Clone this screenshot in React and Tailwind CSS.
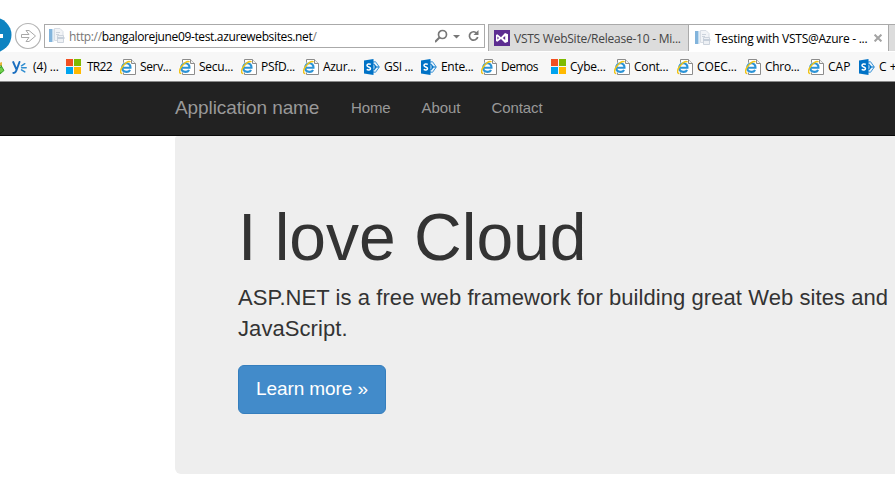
const UI = "font-['Open_Sans','Noto_Sans',sans-serif]";

function IeIcon() {
  return (
    <svg width="16" height="16" viewBox="0 0 16 16" className="block shrink-0">
      <path d="M3.500 .5h8l4 4v11h-12z" fill="#fff" stroke="#8c8c8c" />
      <path d="M11.500 .5v4h4" fill="#f2f2f2" stroke="#8c8c8c" />
      <circle cx="6" cy="8.500" r="5.500" fill="#fff" />
      <path d="M2.500 8.800h8c.2-2.900-1.700-4.600-4-4.600-2.500 0-4.300 1.900-4.300 4.400 0 2.600 1.800 4.300 4.300 4.300 1.700 0 2.900-.7 3.600-2" fill="none" stroke="#2b93d6" strokeWidth="2.100" />
      <path d="M2.300 14.600C-.6 14.400.3 10 3.400 6.400 5.800 3.600 9 1.700 10.500 2.900" fill="none" stroke="#f0c419" strokeWidth="1.500" />
    </svg>
  );
}

function MsIcon() {
  return (
    <svg width="15" height="15" viewBox="0 0 15 15" className="block shrink-0">
      <path fill="#f25022" d="M0 0h7v7H0z" />
      <path fill="#7fba00" d="M8 0h7v7H8z" />
      <path fill="#00a4ef" d="M0 8h7v7H0z" />
      <path fill="#ffb900" d="M8 8h7v7H8z" />
    </svg>
  );
}

function SharePointIcon() {
  return (
    <svg width="16" height="16" viewBox="0 0 16 16" className="block shrink-0">
      <path d="M9 3l2.500-.3L15.400 8l-3.900 5.300L9 13" fill="#e4f1fb" stroke="#3b93d6" strokeWidth="1" />
      <path d="M9.500 4.800L12.300 8l-2.800 3.200M10 8h5" fill="none" stroke="#0072c6" strokeWidth="1.100" />
      <path d="M0 1.500L9.500 0v16L0 14.500z" fill="#0072c6" />
      <path d="M6.800 5.400C5.400 4.500 3 4.800 3 6.400c0 1.900 3.500 1.400 3.500 3.200 0 1.600-2.400 1.700-3.800.8" fill="none" stroke="#fff" strokeWidth="1.500" />
    </svg>
  );
}

function YammerIcon() {
  return (
    <svg width="16" height="16" viewBox="0 0 16 16" className="block shrink-0">
      <path d="M1.200 3l3.300 7.600M7.500 3L4.300 11.600c-.7 2-1.300 2.600-3 2.300" fill="none" stroke="#1b6fc0" strokeWidth="1.900" strokeLinecap="round" />
      <path d="M9.500 6.800l3.300-2.100M9.600 8.800h4.600M9.500 10.800l3.300 2.100" fill="none" stroke="#2f8dd0" strokeWidth="1.500" strokeLinecap="round" />
    </svg>
  );
}

function PageIcon() {
  return (
    <svg width="16" height="16" viewBox="0 0 16 16" className="block shrink-0">
      <path d="M0 1h3.500v13H0z" fill="#82b4dc" />
      <path d="M3.500 1h1v13h-1z" fill="#c6dcee" />
      <path d="M5.500 .5h5.500l3 3v9h-8.500z" fill="#f2f4f7" stroke="#d8dde4" />
      <path d="M7 4.500h4M7 6.500h3" stroke="#ccd3dc" />
      <path d="M8.500 7.500h6v7h-6z" fill="#eef1f5" stroke="#cdd4dd" />
      <path d="M8 9h7.500v2H8z" fill="#c6cfda" />
    </svg>
  );
}

const icons = { ie: IeIcon, ms: MsIcon, sp: SharePointIcon, ya: YammerIcon };

const bookmarks = [
  ["ya", "(4) ...", "w-[54px]", "gap-[5px] tracking-[-0.1px]"],
  ["ms", "TR22", "w-[54px]", "gap-[6px] tracking-[-0.75px]"],
  ["ie", "Serv...", "w-[59px]", "gap-1 tracking-[-0.35px]"],
  ["ie", "Secu...", "w-[62px]", "gap-1 tracking-[-0.25px]"],
  ["ie", "PSfD...", "w-[62px]", "gap-1 tracking-[-0.3px]"],
  ["ie", "Azur...", "w-[61px]", "gap-1 tracking-[-0.3px]"],
  ["sp", "GSI ...", "w-[57px]", "gap-1 tracking-[-0.3px]"],
  ["sp", "Ente...", "w-[60px]", "gap-1 tracking-[-0.3px]"],
  ["ie", "Demos", "w-[70px]", "gap-1 tracking-[-0.5px]"],
  ["ms", "Cybe...", "w-[63px]", "gap-1 tracking-[-0.2px]"],
  ["ie", "Cont...", "w-[63px]", "gap-1 tracking-[-0.2px]"],
  ["ie", "COEC...", "w-[68px]", "gap-1 tracking-[-0.1px]"],
  ["ie", "Chro...", "w-[63px]", "gap-1 tracking-[-0.3px]"],
  ["ie", "CAP", "w-[51px]", "gap-1 tracking-[0px]"],
  ["sp", "C +", "w-[60px]", "gap-1 tracking-[0px]"],
];

function AddressRow() {
  return (
    <div className="flex h-[52px] items-start overflow-hidden bg-white">
      <svg width="44" height="52" viewBox="0 0 44 52" className="block shrink-0">
        <circle cx="-6" cy="35" r="17.500" fill="#0d83c1" />
        <path d="M-6 34h9v4h-9z" fill="#fff" />
        <circle cx="28" cy="36" r="12.500" fill="#fff" stroke="#b4b4b4" strokeWidth="1.200" />
        <path d="M21.500 34.500h7.500l-3-4h3l6.500 5.500-6.500 5.500h-3l3-4h-7.500z" fill="#fff" stroke="#a9a9a9" />
      </svg>
      <div className="mt-6 flex h-6 w-[441px] items-center border border-[#aaa] pl-[4px]">
        <PageIcon />
        <span className="ml-[4px] w-[366px] whitespace-nowrap pt-[2px] text-[12px] leading-4 tracking-[-0.36px] text-[#777]">
          http://<span className="text-black">bangalorejune09-test.azurewebsites.net</span>/
        </span>
        <svg width="48" height="16" viewBox="0 0 48 16" className="block shrink-0">
          <circle cx="7.500" cy="6.500" r="4" fill="none" stroke="#777" strokeWidth="1.700" />
          <path d="M4.500 9.500L0 14" stroke="#777" strokeWidth="2" />
          <path d="M18 7h7l-3.500 3.500z" fill="#777" />
          <path d="M42.100 5.600A4.200 4.200 0 1 0 42.700 9" fill="none" stroke="#777" strokeWidth="1.700" />
          <path d="M43.500 2v5h-5z" fill="#777" />
        </svg>
      </div>
      <div className="ml-[3px] mt-6 flex h-[27px] flex-1 border-l border-t border-[#aaa]">
        <div className="flex w-[200px] shrink-0 items-center border-r border-[#aaa] bg-[#dcdcdc] pl-[5px]">
          <svg width="16" height="16" viewBox="0 0 16 16" className="block shrink-0">
            <path d="M0 0h16v16H0z" fill="#5c2d91" />
            <path d="M2 5l1.300-.7L7 7.200 11 3l3 1.300v7.500L11 13 7 8.900l-3.700 2.900L2 11zM3.400 6.600v2.900L5.100 8zM8.800 8l2.400 2V6.100z" fill="#fff" fillRule="evenodd" />
          </svg>
          <span className="ml-1 whitespace-nowrap pt-px text-[12px] leading-4 tracking-[-0.24px] text-[#444]">VSTS WebSite/Release-10 - Mi...</span>
        </div>
        <div className="flex w-[200px] shrink-0 items-center border-r border-[#aaa] bg-white pl-[6px]">
          <PageIcon />
          <span className="ml-[4px] w-[159px] whitespace-nowrap pt-px text-[12px] leading-4 tracking-[-0.26px] text-black">Testing with VSTS@Azure - ...</span>
          <svg width="8" height="8" viewBox="0 0 8 8" className="block shrink-0">
            <path d="M.6 .6l6.800 6.800M7.400 .6L.6 7.400" stroke="#a3a3a3" strokeWidth="2" />
          </svg>
        </div>
        <div className="flex-1 bg-[#dcdcdc]" />
      </div>
    </div>
  );
}

function BookmarksBar() {
  return (
    <div className="flex h-[30px] items-center overflow-hidden border-b border-[#8a8a8a] bg-[#f7f7f7]">
      <svg width="12" height="16" viewBox="0 0 12 16" className="block shrink-0">
        <path d="M-3 5l5-2v4h-5z" fill="#e5b53c" />
        <path d="M-1 7.500l2 1v-2l3 5-4 3.500v-2h-1z" fill="#6fd04a" stroke="#2a9a1a" strokeWidth=".9" />
      </svg>
      {bookmarks.map(([kind, label, width, spacing]) => {
        const Icon = icons[kind];
        return (
          <div key={label} className={`flex shrink-0 items-center ${width} ${spacing}`}>
            <Icon />
            <span className="whitespace-nowrap pt-px text-[12px] leading-4 text-black">{label}</span>
          </div>
        );
      })}
    </div>
  );
}

export default function App() {
  return (
    <div className="h-[483px] w-[895px] overflow-hidden bg-white">
      <div className={UI}>
        <AddressRow />
        <BookmarksBar />
      </div>
      <div className="font-['Liberation_Sans',Arial,sans-serif]">
        <nav className="flex h-[54px] items-center border-b border-[#080808] bg-[#222] pb-[2px] pl-[175px] text-[#999]">
          <a className="w-[176px] whitespace-nowrap text-[19px] leading-5 tracking-[-0.09px]">Application name</a>
          <a className="w-[70.5px] text-[15px] leading-5 tracking-[-0.1px]">Home</a>
          <a className="w-[70px] text-[15px] leading-5 tracking-[-0.1px]">About</a>
          <a className="text-[15px] leading-5 tracking-[-0.1px]">Contact</a>
        </nav>
        <main className="ml-[175px] h-[338px] rounded-bl-[6px] rounded-tl-[3px] bg-[#eee] pl-[63px] pt-[68px] text-[#333]">
          <h1 className="whitespace-nowrap text-[66px] font-medium leading-[66px]">I love Cloud</h1>
          <p className="mt-[12px] whitespace-nowrap text-[22px] leading-[31px] tracking-[0.07px]">
            ASP.NET is a free web framework for building great Web sites and
            <br />
            JavaScript.
          </p>
          <a className="mt-[21px] flex h-[49px] w-[148px] items-center justify-center rounded-[6px] border border-[#357ebd] bg-[#428bca] text-[19px] tracking-[-0.08px] text-white">
            Learn more »
          </a>
        </main>
      </div>
    </div>
  );
}
